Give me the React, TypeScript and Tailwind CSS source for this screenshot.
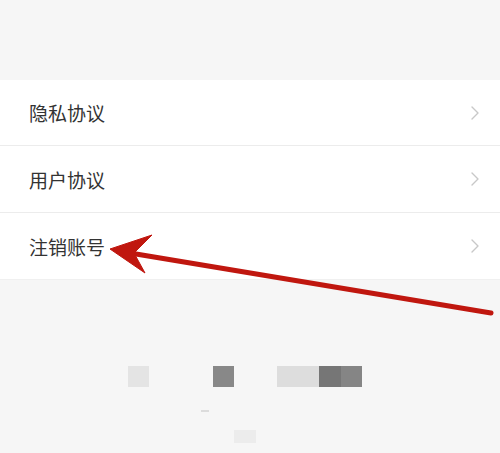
import React from "react";

const items = ["隐私协议", "用户协议", "注销账号"];

function Chevron() {
  return (
    <svg width="10" height="16" viewBox="0 0 10 16" className="shrink-0">
      <path d="M2 2 L8 8 L2 14" fill="none" stroke="#c8c8c8" strokeWidth="1.4" strokeLinecap="round" strokeLinejoin="round" />
    </svg>
  );
}

export default function App() {
  return (
    <div
      className="relative w-[500px] h-[453px] overflow-hidden bg-[#f6f6f6]"
      style={{ fontFamily: '"Noto Sans CJK SC", "Noto Sans", sans-serif' }}
    >
      <div className="h-[80px]" />
      <div className="bg-white">
        {items.map((t, i) => (
          <div key={t}>
            <div
              className={`flex items-center justify-between pl-[29px] pr-[20px] ${i === 0 ? "h-[65px]" : "h-[66px]"}`}
            >
              <span className="text-[19px] text-[#333333] leading-none">{t}</span>
              <Chevron />
            </div>
            {i < items.length - 1 && <div className="h-px bg-[#ececec]" />}
          </div>
        ))}
      </div>
      <div className="h-px bg-[#f0f0f0]" />
      <div className="pt-[86px]">
        <div className="flex h-[21px]">
          <div className="ml-[128px] w-[21px] bg-[#e4e4e4]" />
          <div className="ml-[64px] w-[21px] bg-[#888888]" />
          <div className="ml-[43px] w-[42px] bg-[#dddddd]" />
          <div className="w-[22px] bg-[#767676]" />
          <div className="w-[21px] bg-[#858585]" />
        </div>
        <div className="mt-[23px] ml-[201px] w-[8px] h-[2px] bg-[#dcdcdc]" />
        <div className="mt-[18px] ml-[234px] w-[22px] h-[13px] bg-[#ececec]" />
      </div>
      <svg
        className="absolute left-0 top-0 pointer-events-none"
        width="500"
        height="453"
        viewBox="0 0 500 453"
      >
        <line x1="130" y1="253" x2="491" y2="313" stroke="#c0170f" strokeWidth="5" strokeLinecap="round" />
        <polygon points="110,249 152,235 134,253 145,273" fill="#c0170f" stroke="#c0170f" strokeWidth="1" strokeLinejoin="round" />
      </svg>
    </div>
  );
}
